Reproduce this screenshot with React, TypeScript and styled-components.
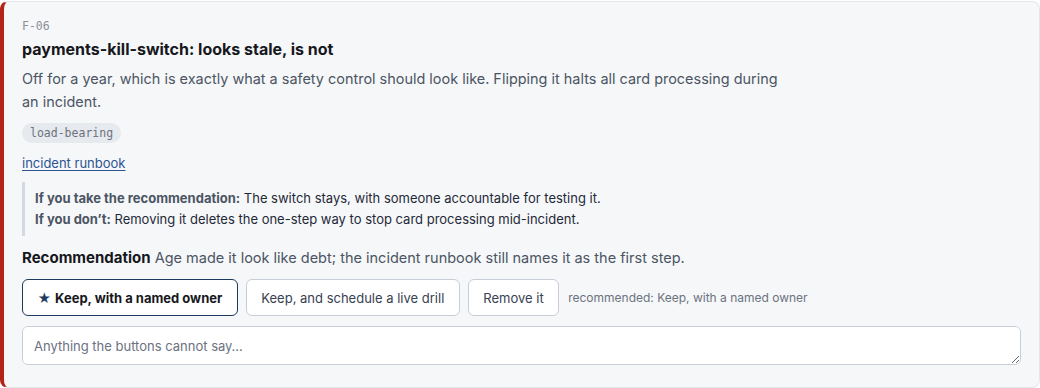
import React from "react";
import styled, { createGlobalStyle } from "styled-components";

const Global = createGlobalStyle`
  html, body { margin: 0; padding: 0; background: #ffffff; }
  body { font-family: Inter, "Noto Sans", sans-serif; -webkit-font-smoothing: antialiased; }
  * { box-sizing: border-box; }
`;

const Page = styled.div`
  padding: 1px 0 0 0;
`;

const Card = styled.section`
  background: #f6f7f9;
  border: 1px solid #e3e6eb;
  border-left: 4px solid #b42318;
  border-radius: 8px;
  padding: 16px 18px 22px 18px;
  display: flex;
  flex-direction: column;
`;

const Code = styled.div`
  font-family: "DejaVu Sans Mono", ui-monospace, monospace;
  font-size: 11.5px;
  line-height: 16px;
  color: #8b9099;
`;

const Title = styled.h3`
  margin: 3px 0 0 0;
  font-size: 16px;
  line-height: 24px;
  font-weight: 700;
  color: #16181d;
`;

const Desc = styled.p`
  margin: 6px 0 0 0;
  max-width: 770px;
  font-size: 14.45px;
  line-height: 23px;
  color: #4b5563;
`;

const Tags = styled.div`
  display: flex;
  gap: 6px;
  margin-top: 10px;
`;

const Tag = styled.span`
  font-family: "DejaVu Sans Mono", ui-monospace, monospace;
  font-size: 11.5px;
  line-height: 20px;
  padding: 0 8px;
  border-radius: 10px;
  background: #e6e9ee;
  color: #6b7280;
`;

const Link = styled.a`
  margin-top: 10px;
  align-self: flex-start;
  font-size: 13px;
  line-height: 20px;
  color: #2c5491;
  text-decoration: underline;
  text-underline-offset: 2px;
`;

const Quote = styled.div`
  margin-top: 9px;
  border-left: 3px solid #d4d9e1;
  padding: 6px 0 6px 10px;
  display: flex;
  flex-direction: column;
`;

const QuoteLine = styled.div`
  font-size: 13px;
  line-height: 21px;
  color: #1f2937;
`;

const QuoteLabel = styled.strong`
  font-weight: 700;
  color: #4b5563;
`;

const Rec = styled.div`
  margin-top: 10px;
  font-size: 14.5px;
  line-height: 23px;
  color: #4b5563;
`;

const RecLabel = styled.strong`
  font-weight: 700;
  font-size: 15px;
  color: #16181d;
`;

const Actions = styled.div`
  margin-top: 10px;
  display: flex;
  align-items: center;
  gap: 8px;
`;

const Choice = styled.button<{ $primary?: boolean }>`
  font-family: Inter, "Noto Sans", sans-serif;
  height: 37px;
  padding: 0 14.5px;
  font-size: 13px;
  border-radius: 6px;
  background: #ffffff;
  cursor: pointer;
  border: ${(p) => (p.$primary ? "1.5px solid #1e3a5f" : "1px solid #c8ced8")};
  font-weight: ${(p) => (p.$primary ? 700 : 400)};
  color: ${(p) => (p.$primary ? "#16181d" : "#374151")};
`;

const Star = styled.span`
  color: #1e3a5f;
  margin-right: 4px;
`;

const Hint = styled.span`
  margin-left: 1px;
  font-size: 12px;
  color: #6b7280;
`;

const Note = styled.textarea`
  display: block;
  margin-top: 10px;
  width: 100%;
  height: 39px;
  padding: 10px 11px;
  font-family: Inter, "Noto Sans", sans-serif;
  font-size: 13px;
  line-height: 18px;
  border: 1px solid #c8ced8;
  border-radius: 6px;
  background: #ffffff;
  color: #1f2937;
  resize: vertical;
  &::placeholder { color: #6b7280; }
`;

export default function App() {
  return (
    <Page>
      <Global />
      <Card>
        <Code>F-06</Code>
        <Title>payments-kill-switch: looks stale, is not</Title>
        <Desc>
          Off for a year, which is exactly what a safety control should look like. Flipping it halts all card
          processing during an incident.
        </Desc>
        <Tags>
          <Tag>load-bearing</Tag>
        </Tags>
        <Link href="#">incident runbook</Link>
        <Quote>
          <QuoteLine>
            <QuoteLabel>If you take the recommendation:</QuoteLabel> The switch stays, with someone accountable for
            testing it.
          </QuoteLine>
          <QuoteLine>
            <QuoteLabel>If you don’t:</QuoteLabel> Removing it deletes the one-step way to stop card processing
            mid-incident.
          </QuoteLine>
        </Quote>
        <Rec>
          <RecLabel>Recommendation</RecLabel> Age made it look like debt; the incident runbook still names it as the
          first step.
        </Rec>
        <Actions>
          <Choice $primary>
            <Star>★</Star>Keep, with a named owner
          </Choice>
          <Choice>Keep, and schedule a live drill</Choice>
          <Choice>Remove it</Choice>
          <Hint>recommended: Keep, with a named owner</Hint>
        </Actions>
        <Note placeholder="Anything the buttons cannot say…" />
      </Card>
    </Page>
  );
}
